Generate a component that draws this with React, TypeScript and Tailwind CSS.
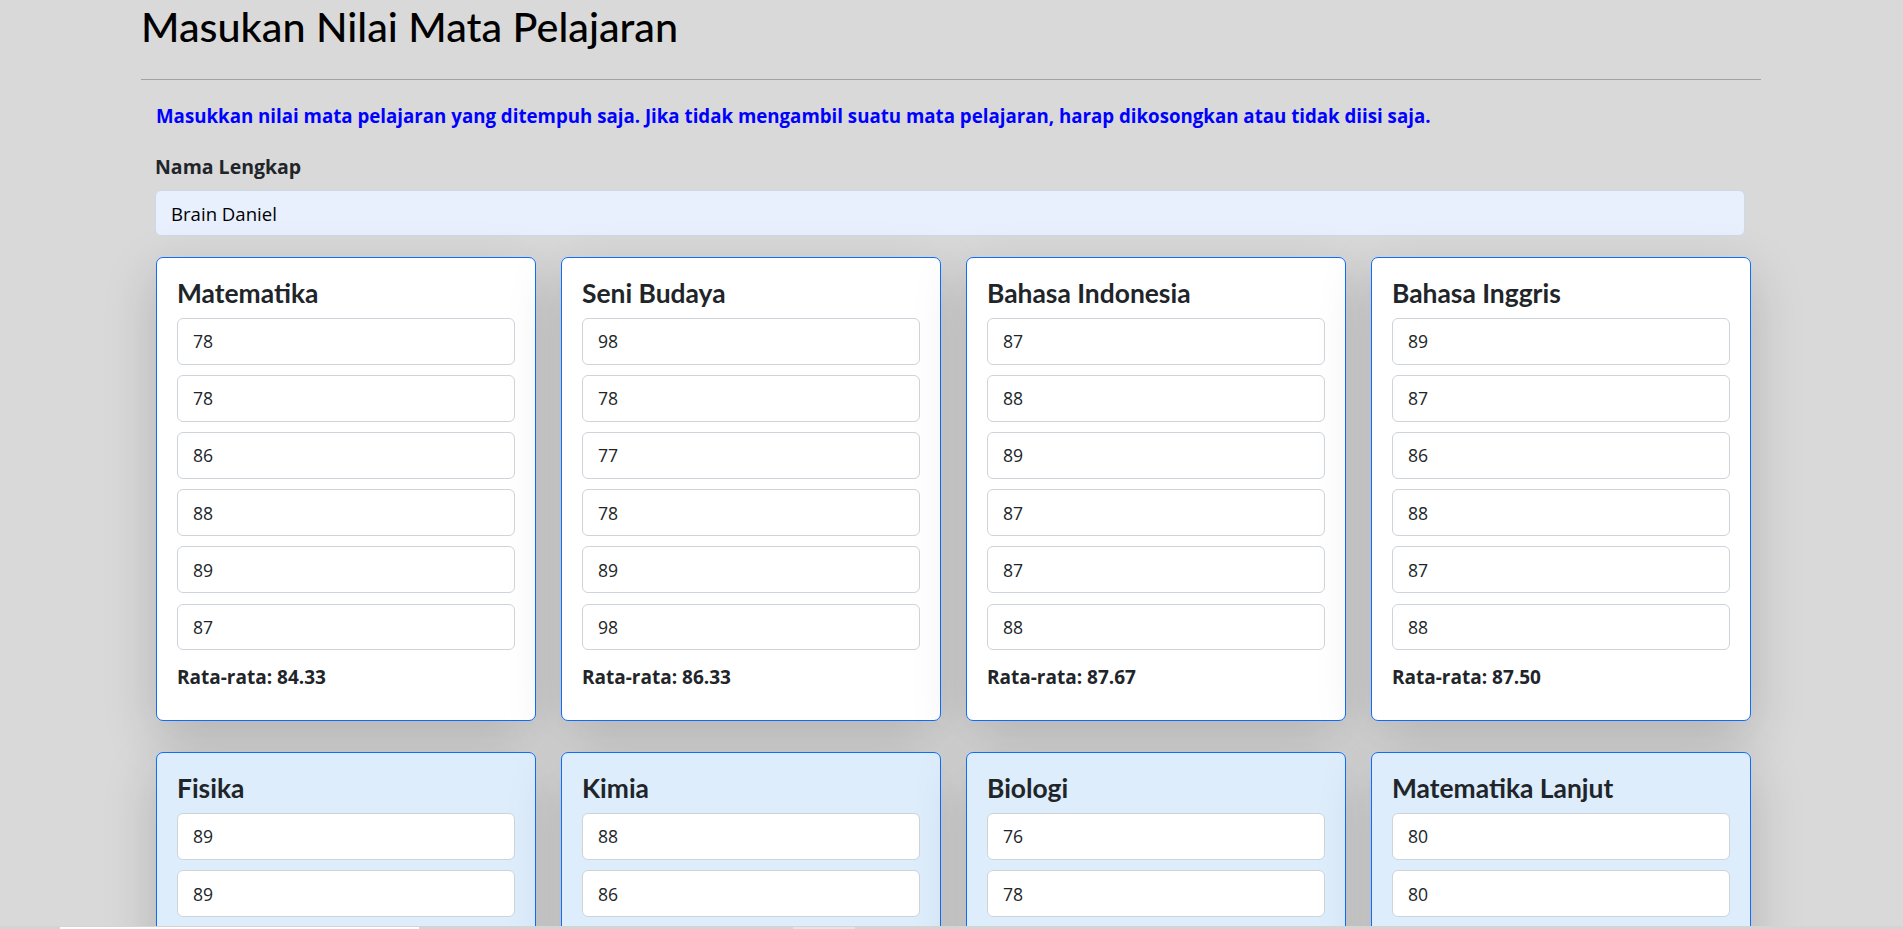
import React from "react";

type Subject = { name: string; vals: string[]; avg: string };

const row1: Subject[] = [
  { name: "Matematika", vals: ["78", "78", "86", "88", "89", "87"], avg: "84.33" },
  { name: "Seni Budaya", vals: ["98", "78", "77", "78", "89", "98"], avg: "86.33" },
  { name: "Bahasa Indonesia", vals: ["87", "88", "89", "87", "87", "88"], avg: "87.67" },
  { name: "Bahasa Inggris", vals: ["89", "87", "86", "88", "87", "88"], avg: "87.50" },
];

const row2: Subject[] = [
  { name: "Fisika", vals: ["89", "89", "87", "88", "86", "85"], avg: "87.33" },
  { name: "Kimia", vals: ["88", "86", "85", "87", "88", "86"], avg: "86.67" },
  { name: "Biologi", vals: ["76", "78", "80", "82", "79", "81"], avg: "79.33" },
  { name: "Matematika Lanjut", vals: ["80", "80", "82", "84", "81", "83"], avg: "81.67" },
];

function Card({ s, tinted }: { s: Subject; tinted: boolean }) {
  return (
    <div
      className={
        "rounded-[7px] border border-[#0d6efd] px-[20px] pt-[20px] pb-[30px] shadow-[0_17.6px_52.8px_rgba(0,0,0,0.175)] " +
        (tinted ? "bg-[#ddedfc]" : "bg-white")
      }
    >
      <h4 className="mb-[8.6px] font-['Lato',sans-serif] text-[26.4px] leading-[31.7px] font-bold text-[#212529]">{s.name}</h4>
      <div className="flex flex-col gap-[10.7px]">
        {s.vals.map((v, i) => (
          <input
            key={i}
            type="text"
            defaultValue={v}
            className="block h-[46.4px] w-full rounded-[6px] border border-[#ced4da] bg-white px-[15px] font-['Open_Sans',sans-serif] text-[17.6px] text-[#212529] outline-none"
          />
        ))}
      </div>
      <p className="mt-[13.7px] font-['Open_Sans',sans-serif] text-[19px] leading-[26.4px] font-bold text-[#212529]">
        Rata-rata: {s.avg}
      </p>
    </div>
  );
}

export default function App() {
  return (
    <div className="min-h-screen bg-[#d9d9d9] font-['Open_Sans',sans-serif]">
      <div className="ml-[141px] w-[1620px] pb-[40px]">
        <h1 className="font-['Lato',sans-serif] text-[41.3px] leading-[53px] font-medium text-black">
          Masukan Nilai Mata Pelajaran
        </h1>
        <hr className="mt-[26px] h-0 border-0 border-t border-[#a2a2a2]" />
        <p className="mt-[23px] ml-[15px] text-[18.7px] leading-[26.4px] font-bold text-[#0000ff]">
          Masukkan nilai mata pelajaran yang ditempuh saja. Jika tidak mengambil suatu mata pelajaran, harap dikosongkan atau tidak diisi saja.
        </p>
        <label className="mt-[25px] ml-[14px] block text-[19.5px] leading-[26.4px] font-bold text-[#212529]">Nama Lengkap</label>
        <input
          type="text"
          defaultValue="Brain Daniel"
          className="mt-[9px] ml-[14px] block h-[46px] w-[1590px] rounded-[6px] border border-[#cfd8e6] bg-[#e8f0fe] px-[15px] pt-[2px] text-[18.6px] text-black outline-none"
        />
        <div className="mt-[21px] ml-[15px] grid w-[1595px] grid-cols-4 gap-x-[25px] gap-y-[31px]">
          {row1.map((s) => (
            <Card key={s.name} s={s} tinted={false} />
          ))}
          {row2.map((s) => (
            <Card key={s.name} s={s} tinted={true} />
          ))}
        </div>
      </div>
      <div className="fixed bottom-0 left-0 right-0 h-[3px] bg-[#d4d4d4]">
        <div className="absolute left-[60px] top-[1px] h-[2px] w-[359px] bg-white" />
        <div className="absolute left-[793px] top-[1px] h-[2px] w-[62px] bg-[#e4e4e4]" />
      </div>
    </div>
  );
}
